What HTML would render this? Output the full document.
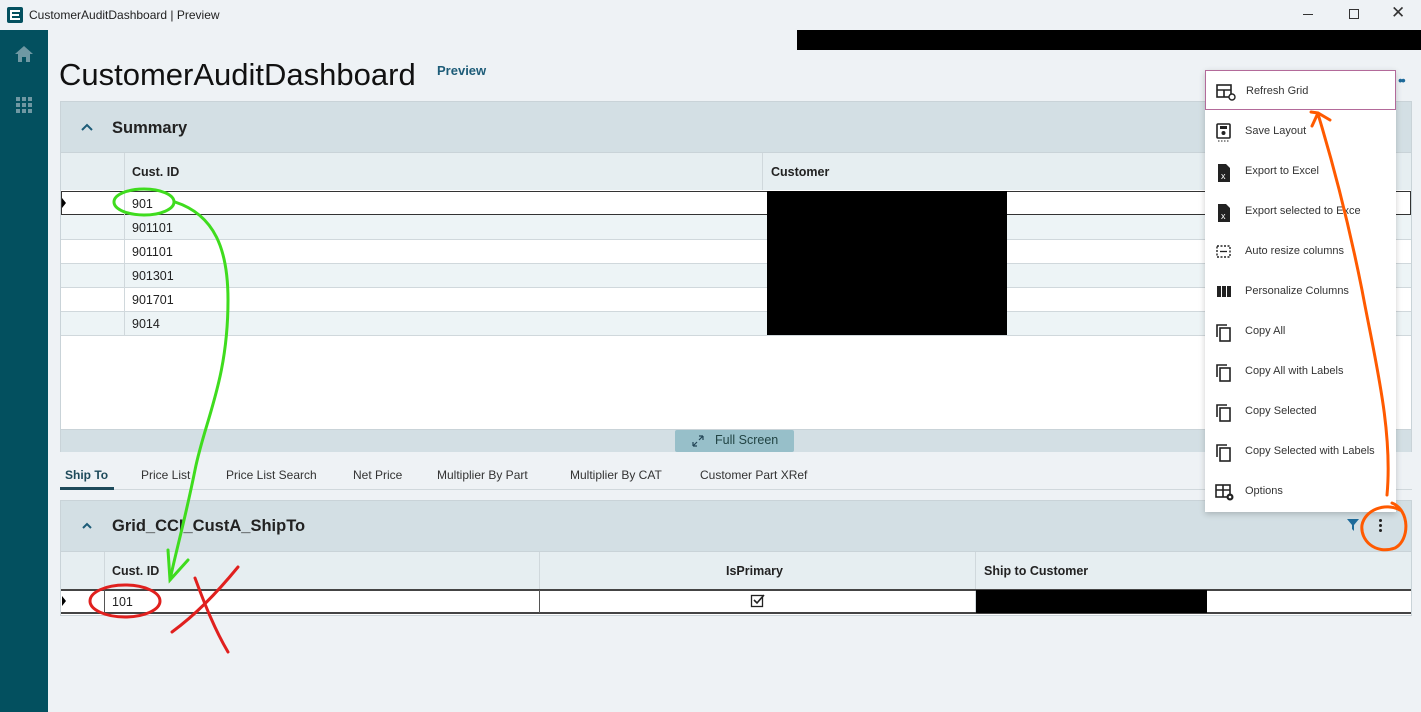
<!DOCTYPE html>
<html><head><meta charset="utf-8">
<style>
*{box-sizing:border-box;margin:0;padding:0}
body{width:1421px;height:712px;overflow:hidden;background:#eef2f5;font-family:"Liberation Sans",sans-serif;position:relative;color:#1a1a1a}
.abs{position:absolute}
.tb{left:0;top:0;width:1421px;height:30px;background:#eef2f5;font-size:12px}
.side{left:0;top:30px;width:48px;height:682px;background:#03505f}
.cell{position:absolute;font-size:12.5px;color:#222}
.hl{position:absolute;height:1px;background:#d0d8dc}
.vl{position:absolute;width:1px;background:#d0d8dc}
.mi{position:absolute;left:0;width:191px;height:40px;font-size:11px;color:#333}
.mi span{position:absolute;left:40px;top:14px}
.mi svg{position:absolute;left:10px;top:12px}
.tab{position:absolute;top:468px;font-size:12px;color:#333}
</style></head><body>
<div class="abs tb">
 <div class="abs" style="left:7px;top:7px;width:16px;height:16px;background:#03505f;border-radius:2px"><div class="abs" style="left:3px;top:3px;width:10px;height:10px;border:2px solid #fff;border-right:none"></div><div class="abs" style="left:5px;top:7px;width:7px;height:2px;background:#fff"></div></div>
 <div class="abs" style="left:29px;top:8px;color:#222">CustomerAuditDashboard | Preview</div>
 <div class="abs" style="left:1303px;top:14px;width:10px;height:1px;background:#333"></div>
 <div class="abs" style="left:1349px;top:9px;width:10px;height:10px;border:1px solid #333"></div>
 <div class="abs" style="left:1391px;top:3px;font-size:17px;color:#333">✕</div>
</div>
<div class="abs side">
 <svg class="abs" style="left:14px;top:15px" width="20" height="18" viewBox="0 0 20 18"><path d="M10 1L1 9h3v8h4v-5h4v5h4V9h3z" fill="#6f98a3"/></svg>
 <svg class="abs" style="left:16px;top:67px" width="17" height="17"><g fill="#6f98a3"><rect x="0" y="0" width="4" height="4"/><rect x="6" y="0" width="4" height="4"/><rect x="12" y="0" width="4" height="4"/><rect x="0" y="6" width="4" height="4"/><rect x="6" y="6" width="4" height="4"/><rect x="12" y="6" width="4" height="4"/><rect x="0" y="12" width="4" height="4"/><rect x="6" y="12" width="4" height="4"/><rect x="12" y="12" width="4" height="4"/></g></svg>
</div>
<div class="abs" style="left:797px;top:30px;width:624px;height:20px;background:#000"></div>
<div class="abs" style="left:59px;top:57px;font-size:31px;color:#111">CustomerAuditDashboard</div>
<div class="abs" style="left:437px;top:63px;font-size:13px;color:#1d5c78;font-weight:bold">Preview</div>
<div class="abs" style="left:1398px;top:72px;font-size:14px;color:#1d6a9a;letter-spacing:-2px">••</div>

<div class="abs" style="left:60px;top:101px;width:1352px;height:351px;background:#fff;border:1px solid #c9d3d8">
 <div class="abs" style="left:0;top:0;width:1350px;height:50px;background:#d3dfe4"></div>
 <svg class="abs" style="left:20px;top:21px" width="12" height="8"><path d="M1 7L6 2l5 5" stroke="#1d5c78" stroke-width="2" fill="none"/></svg>
 <div class="abs" style="left:51px;top:17px;font-size:16.5px;font-weight:bold;color:#222">Summary</div>
 <div class="abs" style="left:0;top:50px;width:1350px;height:38px;background:#e6eef1;border-top:1px solid #c9d3d8"></div>
 <div class="vl" style="left:63px;top:51px;height:182px"></div>
 <div class="vl" style="left:701px;top:51px;height:37px"></div>
 <div class="cell" style="left:71px;top:63px;font-weight:600">Cust. ID</div>
 <div class="cell" style="left:710px;top:63px;font-weight:600">Customer</div>
 <div class="abs" style="left:0;top:89px;width:1350px;height:24px;border:1px solid #333;background:#fff"></div>
 <div class="abs" style="left:1px;top:96px;width:0;height:0;border-left:4px solid #000;border-top:5px solid transparent;border-bottom:5px solid transparent"></div>
 <div class="abs" style="left:0;top:113px;width:1350px;height:24px;background:#edf4f6"></div>
 <div class="abs" style="left:0;top:161px;width:1350px;height:24px;background:#edf4f6"></div>
 <div class="abs" style="left:0;top:209px;width:1350px;height:24px;background:#edf4f6"></div>
 <div class="hl" style="left:0;top:137px;width:1350px"></div>
 <div class="hl" style="left:0;top:161px;width:1350px"></div>
 <div class="hl" style="left:0;top:185px;width:1350px"></div>
 <div class="hl" style="left:0;top:209px;width:1350px"></div>
 <div class="hl" style="left:0;top:233px;width:1350px"></div>
 <div class="vl" style="left:63px;top:89px;height:144px"></div>
 <div class="cell" style="left:71px;top:95px">901</div>
 <div class="cell" style="left:71px;top:119px">901101</div>
 <div class="cell" style="left:71px;top:143px">901101</div>
 <div class="cell" style="left:71px;top:167px">901301</div>
 <div class="cell" style="left:71px;top:191px">901701</div>
 <div class="cell" style="left:71px;top:215px">9014</div>
 <div class="abs" style="left:706px;top:89px;width:240px;height:144px;background:#000"></div>
 <div class="abs" style="left:0;top:327px;width:1350px;height:23px;background:#d3dfe4;border-top:1px solid #c9d3d8"></div>
 <div class="abs" style="left:614px;top:328px;width:119px;height:22px;background:#97bfc9;border-radius:2px"></div>
 <svg class="abs" style="left:631px;top:333px" width="12" height="12"><path d="M1 11l4-4M1 11V7M1 11h4M11 1L7 5M11 1v4M11 1H7" stroke="#245" stroke-width="1.2" fill="none"/></svg>
 <div class="abs" style="left:654px;top:331px;font-size:12.5px;color:#244">Full Screen</div>
</div>

<div class="abs" style="left:60px;top:489px;width:1352px;height:1px;background:#d0d8dc"></div>
<div class="tab" style="left:65px;color:#1d4a5a;font-weight:bold">Ship To</div>
<div class="abs" style="left:60px;top:487px;width:54px;height:3px;background:#1d4a5a"></div>
<div class="tab" style="left:141px">Price List</div>
<div class="tab" style="left:226px">Price List Search</div>
<div class="tab" style="left:353px">Net Price</div>
<div class="tab" style="left:437px">Multiplier By Part</div>
<div class="tab" style="left:570px">Multiplier By CAT</div>
<div class="tab" style="left:700px">Customer Part XRef</div>

<div class="abs" style="left:60px;top:500px;width:1352px;height:116px;background:#fff;border:1px solid #c9d3d8">
 <div class="abs" style="left:0;top:0;width:1350px;height:50px;background:#d3dfe4"></div>
 <svg class="abs" style="left:21px;top:21px" width="10" height="7"><path d="M1 6L5 2l4 4" stroke="#1d5c78" stroke-width="2" fill="none"/></svg>
 <div class="abs" style="left:51px;top:16px;font-size:16.5px;font-weight:bold;color:#222">Grid_CCI_CustA_ShipTo</div>
 <svg class="abs" style="left:1286px;top:18px" width="12" height="12"><path d="M0 0h12L7 6v6L5 10V6z" fill="#1d6a9a"/></svg>
 <div class="abs" style="left:1318px;top:18px;width:3px;height:14px"><div class="abs" style="top:0;width:3px;height:3px;background:#222;border-radius:2px"></div><div class="abs" style="top:5px;width:3px;height:3px;background:#222;border-radius:2px"></div><div class="abs" style="top:10px;width:3px;height:3px;background:#222;border-radius:2px"></div></div>
 <div class="abs" style="left:0;top:50px;width:1350px;height:38px;background:#e6eef1;border-top:1px solid #c9d3d8"></div>
 <div class="vl" style="left:43px;top:51px;height:62px"></div>
 <div class="vl" style="left:478px;top:51px;height:62px"></div>
 <div class="vl" style="left:914px;top:51px;height:62px"></div>
 <div class="cell" style="left:51px;top:63px;font-weight:600">Cust. ID</div>
 <div class="cell" style="left:665px;top:63px;font-weight:600">IsPrimary</div>
 <div class="cell" style="left:923px;top:63px;font-weight:600">Ship to Customer</div>
 <div class="abs" style="left:0;top:88px;width:1350px;height:25px;border-top:2px solid #444;border-bottom:2px solid #444"></div>
 <div class="vl" style="left:43px;top:89px;height:23px;background:#555"></div>
 <div class="vl" style="left:478px;top:89px;height:23px;background:#555"></div>
 <div class="abs" style="left:1px;top:95px;width:0;height:0;border-left:4px solid #000;border-top:5px solid transparent;border-bottom:5px solid transparent"></div>
 <div class="cell" style="left:51px;top:94px">101</div>
 <svg class="abs" style="left:689px;top:92px" width="16" height="16"><rect x="1.5" y="2.5" width="11" height="11" fill="none" stroke="#222" stroke-width="1.3"/><path d="M4 7l3 3 7-8" stroke="#222" stroke-width="1.6" fill="none"/></svg>
 <div class="abs" style="left:915px;top:89px;width:231px;height:23px;background:#000"></div>
</div>

<div class="abs" style="left:1205px;top:70px;width:191px;height:442px;background:#fff;box-shadow:0 2px 6px rgba(0,0,0,.2)">
 <div class="mi" style="top:0;border:1px solid #b36a9a"><svg width="20" height="18"><rect x="1" y="2" width="14" height="12" fill="none" stroke="#222" stroke-width="1.6"/><path d="M1 7h14M8 7v7" stroke="#222" stroke-width="1.6"/><circle cx="16" cy="14" r="3" fill="#fff" stroke="#222" stroke-width="1.4"/></svg><span>Refresh Grid</span></div>
 <div class="mi" style="top:41px"><svg width="20" height="20"><rect x="2" y="1" width="13" height="14" rx="1" fill="none" stroke="#222" stroke-width="1.6"/><rect x="5" y="3" width="7" height="3" fill="#222"/><circle cx="8.5" cy="10" r="2" fill="#222"/><path d="M3 18h11" stroke="#222" stroke-dasharray="1.5 1.5"/></svg><span>Save Layout</span></div>
 <div class="mi" style="top:81px"><svg width="20" height="20"><path d="M3 1h8l4 4v14H3z" fill="#222"/><text x="6" y="16" font-size="9" fill="#fff" font-family="Liberation Sans">x</text></svg><span>Export to Excel</span></div>
 <div class="mi" style="top:121px"><svg width="20" height="20"><path d="M3 1h8l4 4v14H3z" fill="#222"/><text x="6" y="16" font-size="9" fill="#fff" font-family="Liberation Sans">x</text></svg><span>Export selected to Exce</span></div>
 <div class="mi" style="top:161px"><svg width="20" height="20"><rect x="2" y="3" width="13" height="11" fill="none" stroke="#222" stroke-dasharray="2 1.5" stroke-width="1.4"/><path d="M5 8.5h7" stroke="#222" stroke-width="1.3"/></svg><span>Auto resize columns</span></div>
 <div class="mi" style="top:201px"><svg width="20" height="20"><rect x="2" y="3" width="4" height="11" fill="#222"/><rect x="7" y="3" width="4" height="11" fill="#222"/><rect x="12" y="3" width="4" height="11" fill="#222"/></svg><span>Personalize Columns</span></div>
 <div class="mi" style="top:241px"><svg width="20" height="20"><path d="M2 14V2h10" fill="none" stroke="#222" stroke-width="1.6"/><rect x="5" y="5" width="10" height="13" fill="none" stroke="#222" stroke-width="1.6"/></svg><span>Copy All</span></div>
 <div class="mi" style="top:281px"><svg width="20" height="20"><path d="M2 14V2h10" fill="none" stroke="#222" stroke-width="1.6"/><rect x="5" y="5" width="10" height="13" fill="none" stroke="#222" stroke-width="1.6"/></svg><span>Copy All with Labels</span></div>
 <div class="mi" style="top:321px"><svg width="20" height="20"><path d="M2 14V2h10" fill="none" stroke="#222" stroke-width="1.6"/><rect x="5" y="5" width="10" height="13" fill="none" stroke="#222" stroke-width="1.6"/></svg><span>Copy Selected</span></div>
 <div class="mi" style="top:361px"><svg width="20" height="20"><path d="M2 14V2h10" fill="none" stroke="#222" stroke-width="1.6"/><rect x="5" y="5" width="10" height="13" fill="none" stroke="#222" stroke-width="1.6"/></svg><span>Copy Selected with Labels</span></div>
 <div class="mi" style="top:401px"><svg width="20" height="20"><rect x="1" y="2" width="14" height="12" fill="none" stroke="#222" stroke-width="1.6"/><path d="M1 7h14M8 2v12" stroke="#222" stroke-width="1.6"/><circle cx="15" cy="14" r="3.5" fill="#222"/><circle cx="15" cy="14" r="1.3" fill="#fff"/></svg><span>Options</span></div>
</div>

<svg class="abs" style="left:0;top:0" width="1421" height="712">
 <g fill="none" stroke-linecap="round">
  <ellipse cx="144" cy="202" rx="30" ry="13" stroke="#3fdc1e" stroke-width="3"/>
  <path d="M175 202 C215 215 228 250 228 300 C228 380 205 420 195 470 C185 520 175 555 170 580" stroke="#3fdc1e" stroke-width="3"/>
  <path d="M168 550 L170 580 L188 560" stroke="#3fdc1e" stroke-width="3"/>
  <ellipse cx="125" cy="601" rx="35" ry="16" stroke="#e0201e" stroke-width="3"/>
  <path d="M238 567 C215 595 195 615 172 632" stroke="#e0201e" stroke-width="3"/>
  <path d="M195 578 C205 605 215 630 228 652" stroke="#e0201e" stroke-width="3"/>
  <path d="M1311 112 L1318 113 L1330 120 M1318 113 L1312 126" stroke="#ff5a00" stroke-width="3"/>
  <path d="M1318 114 C1335 170 1350 230 1362 290 C1375 360 1393 430 1387 495" stroke="#ff5a00" stroke-width="3"/>
  <path d="M1392 503 C1410 510 1410 540 1395 548 C1375 555 1360 540 1362 525 C1365 510 1385 502 1400 510" stroke="#ff5a00" stroke-width="3"/>
 </g>
</svg>
</body></html>
